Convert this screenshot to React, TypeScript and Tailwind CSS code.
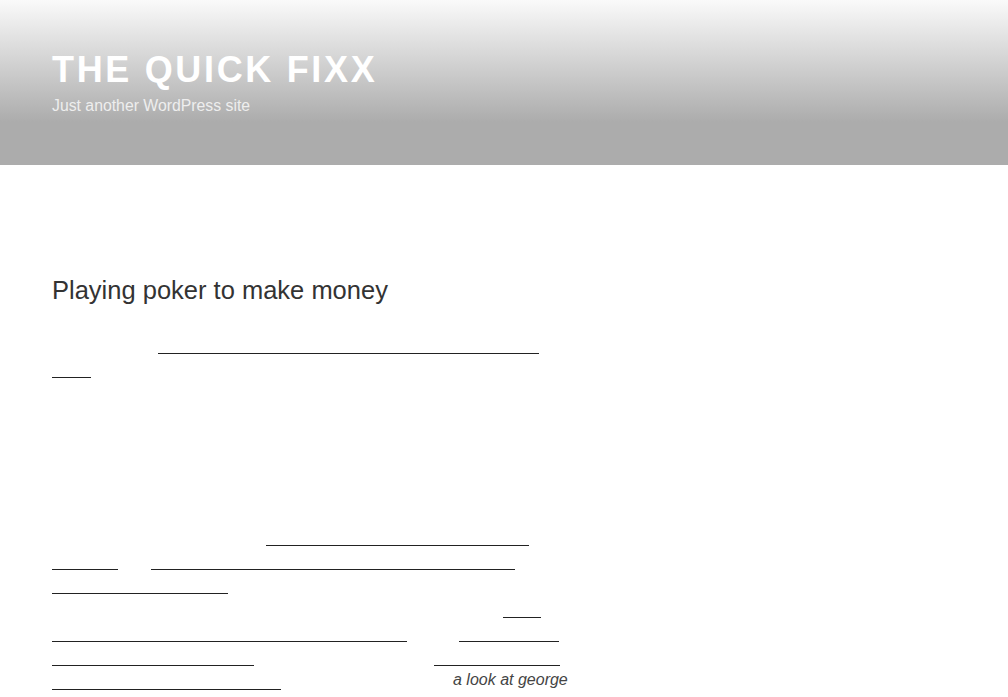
/*
  Blog page — "The Quick Fixx".
  Header with grey gradient, then a single post. The body copy renders
  invisible (as in the capture); only link underlines and the italic aside show.
*/

function Gap({ className }: { className: string }) {
  return <span aria-hidden className={`inline-block h-[21px] shrink-0 ${className}`} />;
}

function Link({ className, children }: { className: string; children: string }) {
  return (
    <a
      href="#"
      className={`inline-block h-[21px] shrink-0 overflow-hidden whitespace-nowrap border-b border-[#222] text-transparent ${className}`}
    >
      {children}
    </a>
  );
}

function Line({ children }: { children?: React.ReactNode }) {
  return <div className="flex h-6 items-start text-transparent">{children}</div>;
}

export default function App() {
  return (
    <div className="min-h-[697px] bg-white font-['Liberation_Sans',Arial,sans-serif]">
      {/* Cabeçalho com degradê */}
      <header className="h-[165px] bg-[linear-gradient(to_bottom,#fafafa_0px,#acacac_122px,#acacac_100%)] px-[52px] pt-[52px]">
        <h1 className="text-[36px] font-bold uppercase leading-none tracking-[0.074em] text-white">
          The Quick Fixx
        </h1>
        <p className="mt-[6px] text-[15.8px] leading-6 text-[#eeeeee]">
          Just another WordPress site
        </p>
      </header>

      {/* Post */}
      <main className="px-[52px] pt-[113px]">
        <article className="w-[515px]">
          <h2 className="text-[25.5px] font-normal leading-none text-[#333]">
            Playing poker to make money
          </h2>

          <div className="mt-[29px] text-[16px] leading-6">
            {/* Parágrafo 1 */}
            <div>
              <Line>
                <Gap className="w-[106px]" />
                <Link className="w-[381px]">online poker rooms and real money tables</Link>
              </Line>
              <Line>
                <Link className="w-[39px]">here</Link>
              </Line>
              <Line />
              <Line />
              <Line />
              <Line />
              <Line />
            </div>

            {/* Parágrafo 2 */}
            <div className="mt-6">
              <Line>
                <Gap className="w-[214px]" />
                <Link className="w-[263px]">best bankroll strategies</Link>
              </Line>
              <Line>
                <Link className="w-[66px]">poker</Link>
                <Gap className="w-[33px]" />
                <Link className="w-[364px]">how professional players win consistently</Link>
              </Line>
              <Line>
                <Link className="w-[176px]">tournament tips</Link>
              </Line>
              <Line>
                <Gap className="w-[451px]" />
                <Link className="w-[38px]">odds</Link>
              </Line>
              <Line>
                <Link className="w-[355px]">reading your opponents at the table</Link>
                <Gap className="w-[52px]" />
                <Link className="w-[100px]">cash games</Link>
              </Line>
              <Line>
                <Link className="w-[202px]">texas hold'em basics</Link>
                <Gap className="w-[180px]" />
                <Link className="w-[126px]">poker bonuses</Link>
              </Line>
              <Line>
                <Link className="w-[229px]">famous poker players</Link>
                <Gap className="w-[172px]" />
                <em className="-mt-px whitespace-nowrap text-[#444]">a look at george</em>
              </Line>
            </div>
          </div>
        </article>
      </main>
    </div>
  );
}
